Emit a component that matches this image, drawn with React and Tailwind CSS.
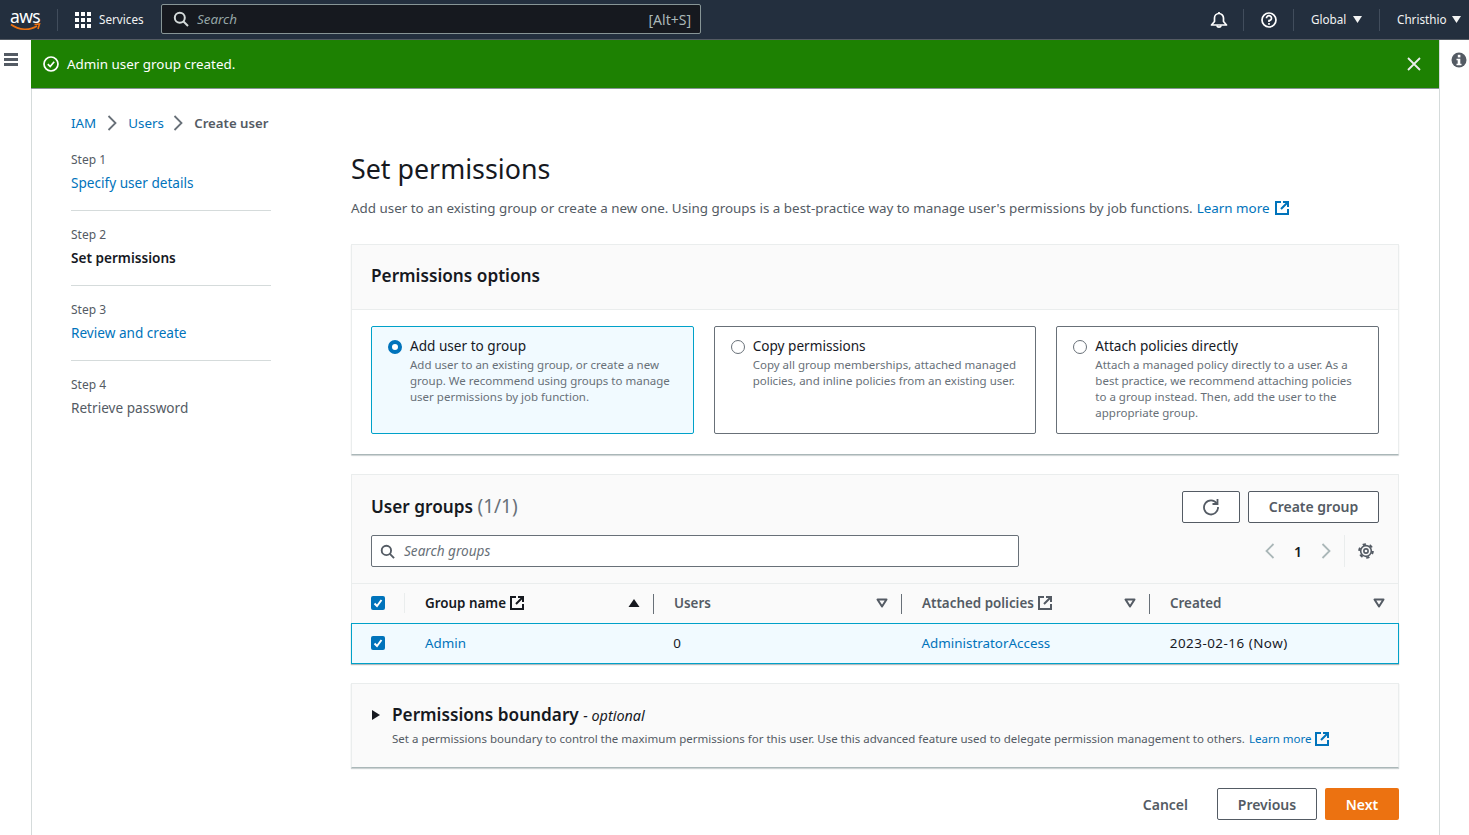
import React from 'react';

const Ext = ({ color = '#16191f' }) => (
  <svg width="14" height="14" viewBox="0 0 14 14" fill="none" stroke={color} strokeWidth="2" className="shrink-0">
    <path d="M6 1H1v12h12V8" />
    <path d="M8 1h5v5M13 1L6 8" />
  </svg>
);

const SortDown = () => (
  <svg width="12" height="10" viewBox="0 0 12 10" fill="none" stroke="#545b64" strokeWidth="2">
    <path d="M1.5 1.5h9L6 8.5z" strokeLinejoin="round" />
  </svg>
);

const CheckBox = () => (
  <div className="w-[14px] h-[14px] rounded-[2px] bg-[#0073bb] flex items-center justify-center">
    <svg width="12" height="12" viewBox="0 0 12 12" fill="none" stroke="#fff" strokeWidth="2">
      <path d="M2.5 6.5L5 9l4.5-6" />
    </svg>
  </div>
);

const TopDivider = () => <div className="w-px h-[22px] bg-[#414d5c]" />;

function TopBar() {
  return (
    <header className="h-[40px] bg-[#232f3e] border-b border-[#545b64] flex items-center text-white text-[11.7px] shrink-0">
      <div className="ml-[10px] w-[30px] h-[24px] relative">
        <span className="absolute left-0 -top-[4px] text-[17.5px] leading-[24px] tracking-[-0.6px]">aws</span>
        <svg className="absolute left-0 top-[15px]" width="31" height="9" viewBox="0 0 31 9" fill="none">
          <path d="M1 1.5C9 7.5 20 7.5 27 3" stroke="#ec7211" strokeWidth="1.6" />
          <path d="M24.5 1.5L29.5 1l-1.5 5" stroke="#ec7211" strokeWidth="1.6" />
        </svg>
      </div>
      <div className="ml-[17px] w-px h-[22px] bg-[#414d5c]" />
      <div className="ml-[17px] grid grid-cols-3 gap-[2px] w-[16px]">
        {Array.from({ length: 9 }).map((_, i) => <div key={i} className="w-[4px] h-[4px] bg-white" />)}
      </div>
      <span className="ml-[8px] w-[54px] text-[#f2f3f3]">Services</span>
      <div className="ml-[8px] w-[540px] h-[30px] -mt-[1px] bg-[#16191f] border border-[#879596] rounded-[2px] flex items-center pl-[11px] pr-[9px]">
        <svg width="16" height="16" viewBox="0 0 16 16" fill="none" stroke="#d5dbdb" strokeWidth="2">
          <circle cx="6.8" cy="6.8" r="5" />
          <path d="M10.5 10.5L15 15" />
        </svg>
        <span className="ml-[8px] italic text-[13.4px] text-[#95a5a6]">Search</span>
        <span className="ml-auto text-[14px] text-[#aab7b8]">[Alt+S]</span>
      </div>
      <div className="ml-auto flex items-center">
        <svg width="18" height="18" viewBox="0 0 18 18" fill="none" stroke="#fff" strokeWidth="1.7">
          <path d="M1.5 14h15l-3-3.5V7a4.5 4.5 0 0 0-9 0v3.5z" strokeLinejoin="round" />
          <path d="M9 1v1.5M6.8 14.5a2.3 2.3 0 0 0 4.4 0" />
        </svg>
        <div className="ml-[15px] mr-[17px]"><TopDivider /></div>
        <svg width="16" height="16" viewBox="0 0 16 16" fill="none" stroke="#fff" strokeWidth="1.7">
          <circle cx="8" cy="8" r="7" />
          <path d="M5.5 6.3A2.5 2.5 0 1 1 8 8.7V10" />
          <path d="M8 11v1.8" />
        </svg>
        <div className="ml-[16px]"><TopDivider /></div>
        <span className="ml-[17px] w-[36px] text-[#f2f3f3]">Global</span>
        <svg className="ml-[6px]" width="9" height="7" viewBox="0 0 9 7" fill="#f2f3f3"><path d="M0 0h9L4.5 7z" /></svg>
        <div className="ml-[17px]"><TopDivider /></div>
        <span className="ml-[17px] w-[49px] text-[#f2f3f3]">Christhio</span>
        <svg className="ml-[6px] mr-[8px]" width="9" height="7" viewBox="0 0 9 7" fill="#f2f3f3"><path d="M0 0h9L4.5 7z" /></svg>
      </div>
    </header>
  );
}

function Banner() {
  return (
    <div className="h-[49px] -ml-px bg-[#1d8102] border-b border-[#879596] flex items-center pl-[12px] pr-[18px] text-white text-[13.4px]">
      <svg width="16" height="16" viewBox="0 0 16 16" fill="none" stroke="#fff" strokeWidth="1.7">
        <circle cx="8" cy="8" r="7" />
        <path d="M4.8 8.2L7.2 10.6l4-4.8" />
      </svg>
      <span className="ml-[8px]">Admin user group created.</span>
      <svg className="ml-auto" width="14" height="14" viewBox="0 0 14 14" fill="none" stroke="#eaeded" strokeWidth="1.8">
        <path d="M1 1l12 12M13 1L1 13" />
      </svg>
    </div>
  );
}

function Chevron() {
  return (
    <svg width="10" height="16" viewBox="0 0 10 16" fill="none" stroke="#687078" strokeWidth="1.8">
      <path d="M1.5 1l7 7-7 7" />
    </svg>
  );
}

function StepNav() {
  const steps = [
    { step: 'Step 1', label: 'Specify user details', cls: 'text-[#0073bb]' },
    { step: 'Step 2', label: 'Set permissions', cls: 'text-[#16191f] font-semibold' },
    { step: 'Step 3', label: 'Review and create', cls: 'text-[#0073bb]' },
    { step: 'Step 4', label: 'Retrieve password', cls: 'text-[#545b64]' },
  ];
  return (
    <nav className="w-[200px] shrink-0 pt-[19px]">
      {steps.map((s, i) => (
        <div key={s.step} className={i < 3 ? 'h-[75px]' : ''}>
          <div className="text-[12px] leading-[16px] text-[#545b64]">{s.step}</div>
          <div className={`mt-[5px] text-[13.6px] leading-[20px] ${s.cls}`}>{s.label}</div>
          {i < 3 && <div className="mt-[17px] h-px bg-[#d5dbdb]" />}
        </div>
      ))}
    </nav>
  );
}

function Option({ title, desc, selected }) {
  return (
    <div className={`h-[108px] rounded-[2px] border flex pl-[16px] pt-[11px] ${selected ? 'bg-[#f1faff] border-[#00a1c9]' : 'bg-white border-[#687078]'}`}>
      {selected ? (
        <div className="mt-[2px] w-[14px] h-[14px] rounded-full border-[4px] border-[#0073bb] bg-white shrink-0" />
      ) : (
        <div className="mt-[2px] w-[14px] h-[14px] rounded-full border border-[#687078] bg-white shrink-0" />
      )}
      <div className="ml-[8px] pr-[14px]">
        <div className="text-[13.6px] leading-[16px] text-[#16191f]">{title}</div>
        <div className="mt-[3px] text-[11.5px] leading-[16px] text-[#687078]">{desc}</div>
      </div>
    </div>
  );
}

function PermissionsOptions() {
  return (
    <section className="bg-white border border-[#eaeded] border-b-[#aab7b8] rounded-[1px] shadow-[0_1px_1px_0_rgba(0,28,36,0.2)]">
      <div className="h-[65px] bg-[#fafafa] border-b border-[#eaeded] flex items-center pl-[19px] pb-[3px]">
        <h2 className="text-[17.2px] font-semibold text-[#16191f]">Permissions options</h2>
      </div>
      <div className="grid grid-cols-3 gap-[20px] px-[19px] pt-[16px] pb-[20px]">
        <Option selected title="Add user to group" desc="Add user to an existing group, or create a new group. We recommend using groups to manage user permissions by job function." />
        <Option title="Copy permissions" desc="Copy all group memberships, attached managed policies, and inline policies from an existing user." />
        <Option title="Attach policies directly" desc="Attach a managed policy directly to a user. As a best practice, we recommend attaching policies to a group instead. Then, add the user to the appropriate group." />
      </div>
    </section>
  );
}

function HeadCell({ title, ext, sorted, last }) {
  return (
    <div className="flex-1 flex items-center h-[22px]">
      <div className={`flex-1 flex items-center gap-[4px] pr-[13px] text-[13.4px] font-semibold ${sorted ? 'pl-[19px] text-[#16191f]' : 'pl-[20px] text-[#545b64]'}`}>
        <span>{title}</span>
        {ext && <Ext color={sorted ? '#16191f' : '#545b64'} />}
        <span className="ml-auto flex">
          {sorted ? (
            <svg width="12" height="8" viewBox="0 0 12 8" fill="#16191f"><path d="M6 0l5.5 8H.5z" /></svg>
          ) : <SortDown />}
        </span>
      </div>
      {!last && <div className="w-px h-[20px] bg-[#687078]" />}
    </div>
  );
}

function UserGroups() {
  return (
    <section className="bg-[#fafafa] border border-[#eaeded] border-b-0 rounded-[1px]">
      <div className="px-[19px] pt-[16px] flex justify-between items-start h-[60px]">
        <h2 className="text-[17.2px] leading-[30px] font-semibold text-[#16191f]">
          User groups <span className="font-normal text-[19px] text-[#687078]">(1/1)</span>
        </h2>
        <div className="flex gap-[8px]">
          <button className="w-[58px] h-[32px] bg-white border border-[#545b64] rounded-[2px] flex items-center justify-center">
            <svg width="18" height="18" viewBox="0 0 18 18" fill="none" stroke="#545b64" strokeWidth="1.8">
              <path d="M14.8 5.5A7 7 0 1 0 16 9" />
              <path d="M15.5 1v5h-5" />
            </svg>
          </button>
          <button className="w-[131px] h-[32px] pb-[2px] bg-white border border-[#545b64] rounded-[2px] text-[14px] font-semibold text-[#545b64]">Create group</button>
        </div>
      </div>
      <div className="px-[19px] flex items-center h-[32px]">
        <div className="w-[648px] h-[32px] bg-white border border-[#687078] rounded-[2px] flex items-center pl-[8px]">
          <svg width="15" height="15" viewBox="0 0 16 16" fill="none" stroke="#545b64" strokeWidth="2">
            <circle cx="6.8" cy="6.8" r="5" />
            <path d="M10.5 10.5L15 15" />
          </svg>
          <span className="ml-[9px] italic text-[13.6px] text-[#687078]">Search groups</span>
        </div>
        <div className="ml-auto flex items-center">
          <svg width="10" height="16" viewBox="0 0 10 16" fill="none" stroke="#aab7b8" strokeWidth="1.8"><path d="M8.5 1l-7 7 7 7" /></svg>
          <span className="ml-[19px] w-[8px] text-[14px] font-semibold text-[#16191f]">1</span>
          <svg className="ml-[19px]" width="10" height="16" viewBox="0 0 10 16" fill="none" stroke="#aab7b8" strokeWidth="1.8"><path d="M1.5 1l7 7-7 7" /></svg>
          <div className="ml-[13px] w-px h-[32px] bg-[#eaeded]" />
          <svg className="ml-[13px] mr-[5px]" width="16" height="16" viewBox="0 0 18 18" fill="none" stroke="#545b64">
            <circle cx="9" cy="9" r="2.4" strokeWidth="1.8" />
            <circle cx="9" cy="9" r="6" strokeWidth="1.8" />
            <circle cx="9" cy="9" r="7.6" strokeWidth="2.4" strokeDasharray="3.6 4.36" />
          </svg>
        </div>
      </div>
      <div className="mt-[16px] h-[40px] border-t border-[#eaeded] flex items-center">
        <div className="w-[54px] shrink-0 flex items-center h-[22px] pl-[19px] pb-[1px]">
          <CheckBox />
          <div className="ml-[19px] w-px h-[20px] bg-[#eaeded]" />
        </div>
        <div className="flex flex-1">
          <HeadCell title="Group name" ext sorted />
          <HeadCell title="Users" />
          <HeadCell title="Attached policies" ext />
          <HeadCell title="Created" last />
        </div>
      </div>
      <div className="-mx-px h-[41px] pb-[1px] bg-[#f1faff] border border-[#00a1c9] shadow-[0_1px_1px_0_rgba(0,28,36,0.3)] flex items-center text-[13.4px] text-[#16191f]">
        <div className="w-[54px] shrink-0 pl-[19px]"><CheckBox /></div>
        <div className="flex flex-1">
          <div className="flex-1 pl-[19px] text-[#0073bb]">Admin</div>
          <div className="flex-1 pl-[20px]">0</div>
          <div className="flex-1 pl-[20px] text-[#0073bb]">AdministratorAccess</div>
          <div className="flex-1 pl-[20px] tracking-[0.5px]">2023-02-16 (Now)</div>
        </div>
      </div>
    </section>
  );
}

function Boundary() {
  return (
    <section className="h-[85px] bg-[#fafafa] border border-[#eaeded] border-b-[#aab7b8] shadow-[0_1px_1px_0_rgba(0,28,36,0.2)] flex pl-[20px] pt-[19px]">
      <svg className="mt-[7px] shrink-0" width="8" height="10" viewBox="0 0 8 10" fill="#16191f"><path d="M0 0l8 5-8 5z" /></svg>
      <div className="ml-[12px]">
        <div className="leading-[24px] text-[17.2px] font-semibold text-[#16191f]">
          Permissions boundary <span className="font-normal italic text-[14.4px]">- optional</span>
        </div>
        <div className="mt-[3px] flex items-center text-[11.5px] leading-[16px] text-[#545b64]">
          <span>Set a permissions boundary to control the maximum permissions for this user. Use this advanced feature used to delegate permission management to others.</span>
          <span className="ml-[4px] text-[#0073bb]">Learn more</span>
          <span className="ml-[4px]"><Ext color="#0073bb" /></span>
        </div>
      </div>
    </section>
  );
}

export default function App() {
  return (
    <div className="w-[1469px] h-[835px] overflow-hidden flex flex-col bg-white font-['Noto_Sans',sans-serif]">
      <TopBar />
      <div className="flex flex-1 min-h-0">
        <aside className="w-[32px] shrink-0 border-r border-[#d5dbdb] pl-[4px] pt-[13px]">
          <div className="w-[14px] flex flex-col gap-[2px]">
            <div className="h-[3px] bg-[#545b64]" />
            <div className="h-[3px] bg-[#545b64]" />
            <div className="h-[3px] bg-[#545b64]" />
          </div>
        </aside>
        <div className="flex-1 min-w-0 flex flex-col">
          <Banner />
          <div className="pl-[39px] pr-[40px]">
            <div className="pt-[24px] flex items-center text-[13.4px] leading-[20px] h-[44px]">
              <span className="text-[#0073bb]">IAM</span>
              <span className="mx-[11px] flex"><Chevron /></span>
              <span className="w-[34px] text-[#0073bb]">Users</span>
              <span className="mx-[11px] flex"><Chevron /></span>
              <span className="text-[13.2px] text-[#545b64] font-semibold">Create user</span>
            </div>
            <div className="flex">
              <StepNav />
              <main className="ml-[80px] flex-1 min-w-0">
                <h1 className="mt-[18px] text-[26.8px] leading-[36px] text-[#16191f]">Set permissions</h1>
                <div className="mt-[11px] flex items-center text-[13.4px] leading-[20px] text-[#545b64]">
                  <span>Add user to an existing group or create a new one. Using groups is a best-practice way to manage user's permissions by job functions.</span>
                  <span className="ml-[4px] text-[#0073bb]">Learn more</span>
                  <span className="ml-[5px] flex"><Ext color="#0073bb" /></span>
                </div>
                <div className="mt-[26px] flex flex-col gap-[19px]">
                  <PermissionsOptions />
                  <UserGroups />
                  <Boundary />
                </div>
                <div className="mt-[20px] flex items-center justify-end">
                  <span className="text-[14px] font-semibold text-[#545b64]">Cancel</span>
                  <button className="ml-[29px] w-[100px] h-[32px] border border-[#545b64] rounded-[2px] text-[14px] font-semibold text-[#545b64]">Previous</button>
                  <button className="ml-[8px] w-[74px] h-[32px] bg-[#ec7211] rounded-[2px] text-[14px] font-semibold text-white">Next</button>
                </div>
              </main>
            </div>
          </div>
        </div>
        <aside className="w-[30px] shrink-0 border-l border-[#d5dbdb] pl-[11px] pt-[12px]">
          <svg width="16" height="16" viewBox="0 0 16 16">
            <circle cx="8" cy="8" r="7.5" fill="#545b64" />
            <rect x="6.8" y="2.8" width="2.6" height="2.6" fill="#fff" />
            <path d="M5.5 6.8h3.8v5h1.2v1.4H5.5v-1.4h1.2V8.2H5.5z" fill="#fff" />
          </svg>
        </aside>
      </div>
    </div>
  );
}
